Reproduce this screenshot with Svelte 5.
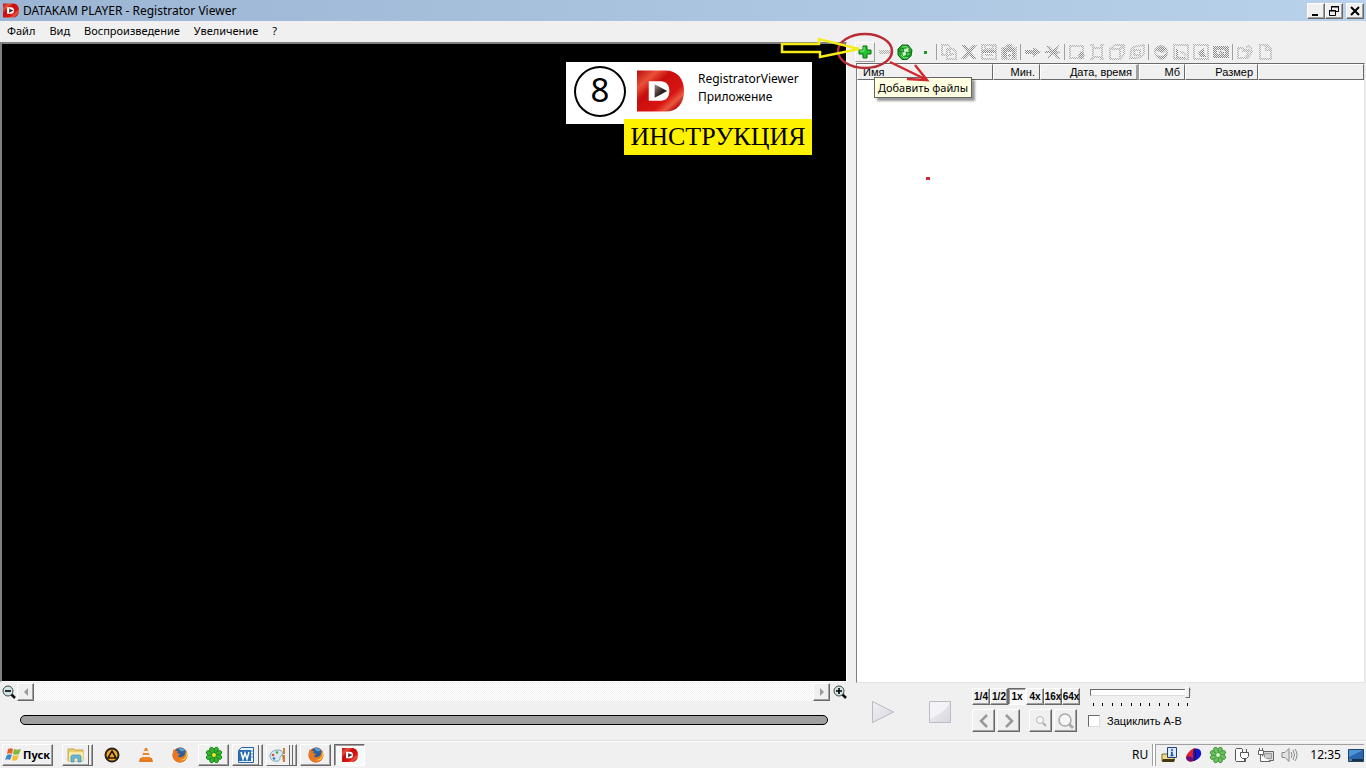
<script>
    const menu = ['Файл', 'Вид', 'Воспроизведение', 'Увеличение', '?'];

    // disabled toolbar groups, every group starts with a separator
    const toolGroups = [
        [
            { title: 'Копировать', d: 'M1 1h6l2 2v8H1z M6 5h6l3 3v7H6z M8 10h5' },
            { title: 'Удалить', d: '', fill: 'M0 1h4l4 4 4-4h4l-6 7 6 7h-4l-4-4-4 4H0l6-7z' },
            { title: 'Сохранить', d: 'M1 1h14v14H1z M4 1v4h8V1 M4 11h8', fill: 'M1 6h14v3H1z' },
            { title: 'Снимок', d: 'M1 4h3l3-3h3l2 3h3v11H1z', fill: 'M2 4h12v10h-3V8H6v6H2z M6 1h4v3H6z M7 10h3v3H7z' }
        ],
        [
            { title: 'Метка', d: '', fill: 'M0 6h8V3l8 5-8 5v-3H0z' },
            { title: 'Убрать метку', d: '', fill: 'M1 2h3l4 4 6-5h1l-4 6 5 1-4 2 3 5h-2l-5-5-4 4H2l4-5H0V7h5z' }
        ],
        [
            { title: 'Область', d: 'M1 2h13v12H1z', fill: 'M9 11l3-4 4 4-4 5z' },
            { title: 'Кадр', d: 'M4 4h9v9H4z M1 1h3v3 M12 4V1h3 M1 15h3v-3 M12 12v3h3' },
            { title: 'Слои', d: 'M1 5l5-4h9v9l-4 5H1z M1 5h10v10 M11 5l4-4' },
            { title: 'Поворот', d: 'M2 8c0-4 3-6 8-6l5-1v7c0 4-4 6-8 6H1z M5 6h6v5H5z' }
        ],
        [
            { title: 'Диск', d: 'M8 2a6 6 0 1 0 .1 0z', fill: 'M1 6l7-5 6 4-4 4z M3 11l6 1 6-4-2 6-5 2z' },
            { title: 'График', d: 'M1 1h14v14H1z M7 8l4 1 2 3', fill: 'M3 5h2v8h8v1H3z' },
            { title: 'Карта', d: 'M1 1h14v14H1z', fill: 'M5 8l6-4v5l3 4H7z' },
            { title: 'Видео', d: '', fill: 'M0 2h16v4H0z M0 10h16v4H0z M0 6h4v4H0z M12 6h4v4h-4z M5 8l3-2 1 2h3l-3 3-2-2z' }
        ],
        [
            { title: 'Открыть', d: 'M1 4h5l1 2h5l-3 8H1z M5 7h10l-4 7H3 M9 3l3-1 3 3' },
            { title: 'Создать', d: 'M3 1h7l4 4v10H3z M9 1v5h5' }
        ]
    ];

    const columns = [
        { name: 'Имя', width: 136 },
        { name: 'Мин.', width: 47 },
        { name: 'Дата, время', width: 99 },
        { name: 'Мб', width: 46 },
        { name: 'Размер', width: 73 }
    ];

    const speeds = ['1/4', '1/2', '1x', '4x', '16x', '64x'];
    let speed = $state('1x');
    let position = $state(0);
    let volume = $state(100);
    let loop = $state(false);
</script>

{#snippet logo()}
    <svg class="logo" viewBox="0 0 48 42" aria-hidden="true">
        <defs>
            <linearGradient id="red" x1="0" y1="0" x2="1" y2="1">
                <stop offset="0" stop-color="#b50d0d" />
                <stop offset=".22" stop-color="#ea5038" />
                <stop offset=".38" stop-color="#c80d0d" />
                <stop offset=".66" stop-color="#d81513" />
                <stop offset=".78" stop-color="#e85a40" />
                <stop offset=".88" stop-color="#b80c10" />
            </linearGradient>
            <linearGradient id="play" x1="0" y1="0" x2="1" y2="1">
                <stop offset="0" stop-color="#a89080" />
                <stop offset=".6" stop-color="#241818" />
                <stop offset="1" stop-color="#806860" />
            </linearGradient>
        </defs>
        <path d="M0 0h29c12 0 19 8 19 21s-7 21-19 21H0z" fill="url(#red)" />
        <path d="M12 11h12c6 0 9 4 9 10s-3 10-9 10H12z" fill="#fff" />
        <path d="M18 14l13 7-13 7z" fill="url(#play)" />
    </svg>
{/snippet}

{#snippet lens(sign)}
    <svg width="14" height="14" viewBox="0 0 14 14" aria-hidden="true">
        <path d="M9 9l4 4" stroke="#111" stroke-width="2.500" />
        <circle cx="6" cy="6" r="5" fill="#cfe6e6" stroke="#444" />
        <path d={sign} stroke="#000" stroke-width="1.600" />
    </svg>
{/snippet}

{#snippet firefox()}
    <svg width="16" height="16" viewBox="0 0 16 16" aria-hidden="true">
        <circle cx="8" cy="8" r="7.5" fill="#d9601b" />
        <circle cx="8.5" cy="6" r="5.4" fill="#2b5f9e" />
        <path d="M6 1.500c3-1 6 0 7 2l-3 1-2-1z" fill="#58a0cf" />
        <path d="M1 4l1-2 1.500 2L6 4l-1 2 3 1-2 2c1 2 5 2 7-2l1-4c2 5 1 8-2 11-4 3-9 1-11-3-1-3 0-5 0-6z" fill="#e87722" />
        <path d="M14 4c1 5-1 8-6 9 4 2 8-2 7-7z" fill="#f8c43c" />
    </svg>
{/snippet}

{#snippet flower(dark, light, core)}
    <svg width="18" height="18" viewBox="0 0 18 18" aria-hidden="true">
        {#each [22, 67, 112, 157, 202, 247, 292, 337] as angle}
            <ellipse cx="9" cy="4" rx="2.200" ry="3.300" fill={light} stroke={dark} stroke-width=".8" transform={`rotate(${angle} 9 9)`} />
        {/each}
        <circle cx="9" cy="9" r="2" fill={core} />
    </svg>
{/snippet}

<div class="window">
    <header class="titlebar">
        <span class="title-icon">{@render logo()}</span>
        <h1>DATAKAM PLAYER - Registrator Viewer</h1>
        <button class="raised caption" aria-label="Свернуть">
            <svg width="12" height="12" viewBox="0 0 12 12"><path d="M2 10h6" stroke="#000" stroke-width="2" /></svg>
        </button>
        <button class="raised caption" aria-label="Восстановить">
            <svg width="12" height="12" viewBox="0 0 12 12" fill="none" stroke="#000"><path d="M3.500 5V1.500h7v5H8M3 2h8M1.500 5.500h6v5h-6zM1 6h7" /></svg>
        </button>
        <button class="raised caption close" aria-label="Закрыть">
            <svg width="12" height="12" viewBox="0 0 12 12"><path d="M2 2l8 8M10 2l-8 8" stroke="#000" stroke-width="2" /></svg>
        </button>
    </header>

    <nav class="menu">
        {#each menu as item}
            <button>{item}</button>
        {/each}
    </nav>

    <main>
        <section class="player">
            <div class="screen">
                <div class="badge">
                    <div class="step">8</div>
                    <div class="app-card">
                        {@render logo()}
                        <p>RegistratorViewer<br />Приложение</p>
                    </div>
                    <div class="manual">ИНСТРУКЦИЯ</div>
                </div>
            </div>
            <div class="zoombar">
                <button class="plain" aria-label="Уменьшить">{@render lens('M3 6h6')}</button>
                <div class="hscroll">
                    <button class="raised" aria-label="Влево">
                        <svg width="6" height="8" viewBox="0 0 6 8"><path d="M5 0v8L1 4z" fill="#999" /></svg>
                    </button>
                    <button class="raised" aria-label="Вправо">
                        <svg width="6" height="8" viewBox="0 0 6 8"><path d="M1 0v8l4-4z" fill="#999" /></svg>
                    </button>
                </div>
                <button class="plain" aria-label="Увеличить">{@render lens('M3 6h6M6 3v6')}</button>
            </div>
            <input class="seek" type="range" min="0" max="100" bind:value={position} aria-label="Позиция" />
        </section>

        <section class="files">
            <div class="toolbar">
                <button class="tool active" aria-label="Добавить файлы">
                    <svg width="14" height="14" viewBox="0 0 14 14"><path d="M5 1h4v4h4v4H9v4H5V9H1V5h4z" fill="#22c62c" stroke="#087010" /><path d="M6 2v4H2" fill="none" stroke="#8af08a" /></svg>
                </button>
                <button class="tool" disabled aria-label="Убрать файлы">
                    <svg width="12" height="4" viewBox="0 0 12 4"><path d="M0 0h12v4H0z" fill="url(#dither-light)" /></svg>
                </button>
                <button class="tool" aria-label="Обновить">
                    <svg width="16" height="16" viewBox="0 0 16 16">
                        <path d="M5 1h6l4 5-1 6-4 3.500H5L1 11V5z" fill="#26a82e" stroke="#0c6414" />
                        <path d="M5 6l6-2 1 6-6 2z" fill="#d8f6d4" />
                        <path d="M1 7l5-3 1 4zM15 9l-5 4-1-5z" fill="#3ccc42" stroke="#0c6414" stroke-width=".7" />
                        <path d="M5 3l4-.500 3 2.500M11 13.500l-4 .5-3-3" fill="none" stroke="#7ee87c" />
                    </svg>
                </button>
                <button class="tool" aria-label="Список"><span class="dot"></span></button>
                {#each toolGroups as group}
                    <span class="separator"></span>
                    {#each group as tool}
                        <button class="tool" disabled aria-label={tool.title}>
                            <svg width="16" height="16" viewBox="0 0 16 16">
                                <path d={tool.d} fill="none" stroke="url(#dither-light)" stroke-width="2" />
                                {#if tool.fill}
                                    <path d={tool.fill} fill="url(#dither)" />
                                {/if}
                            </svg>
                        </button>
                    {/each}
                {/each}
            </div>

            <div class="list">
                <table>
                    <colgroup>
                        {#each columns as column}
                            <col style:width={`${column.width}px`} />
                        {/each}
                        <col />
                    </colgroup>
                    <thead>
                        <tr>
                            {#each columns as column}
                                <th scope="col">{column.name}</th>
                            {/each}
                            <td></td>
                        </tr>
                    </thead>
                </table>
                <span class="mark"></span>
            </div>

            <div class="controls">
                <div class="transport">
                    <button class="plain" disabled aria-label="Пуск">
                        <svg width="24" height="24" viewBox="0 0 24 24"><path d="M1.500 1.500v21l21-10.500z" fill="url(#glass)" stroke="#bbb" /></svg>
                    </button>
                    <button class="plain" disabled aria-label="Стоп">
                        <svg width="24" height="24" viewBox="0 0 24 24">
                            <defs>
                                <linearGradient id="glass" x1="0" y1="0" x2="1" y2="1">
                                    <stop offset="0" stop-color="#f2f2f4" />
                                    <stop offset="1" stop-color="#d6d6de" />
                                </linearGradient>
                                <pattern id="dither" width="2" height="2" patternUnits="userSpaceOnUse">
                                    <path d="M0 0h1v1H0zM1 1h1v1H1z" fill="#8a8a8a" />
                                </pattern>
                                <pattern id="dither-light" width="2" height="2" patternUnits="userSpaceOnUse">
                                    <path d="M0 0h1v1H0zM1 1h1v1H1z" fill="#b0b0b0" />
                                </pattern>
                            </defs>
                            <path d="M1.500 1.500h21v21h-21z" fill="url(#glass)" stroke="#bcbcc4" />
                            <path d="M2 2h20C17 11 12 14 2 19z" fill="#f4f4f8" />
                        </svg>
                    </button>
                </div>
                <div class="playback">
                    <div class="speeds">
                        {#each speeds as value}
                            <button class="raised" class:pressed={speed === value} onclick={() => (speed = value)}>{value}</button>
                        {/each}
                    </div>
                    <div class="steps">
                        <button class="raised" aria-label="Назад">
                            <svg width="18" height="18" viewBox="0 0 18 18"><path d="M12 3L6 9l6 6" fill="none" stroke="#999" stroke-width="2.500" /></svg>
                        </button>
                        <button class="raised" aria-label="Вперёд">
                            <svg width="18" height="18" viewBox="0 0 18 18"><path d="M6 3l6 6-6 6" fill="none" stroke="#999" stroke-width="2.500" /></svg>
                        </button>
                        <button class="raised zoom" aria-label="Мельче">
                            <svg width="18" height="18" viewBox="0 0 18 18"><circle cx="8" cy="8" r="3.500" fill="#f6f6f6" stroke="#b4b4b4" /><path d="M11 11l3 3" stroke="#aaa" stroke-width="2" /></svg>
                        </button>
                        <button class="raised" aria-label="Крупнее">
                            <svg width="18" height="18" viewBox="0 0 18 18"><circle cx="8" cy="8" r="6" fill="#f6f6f6" stroke="#aaa" stroke-width="1.500" /><path d="M12 12l4 4" stroke="#aaa" stroke-width="3" /></svg>
                        </button>
                    </div>
                </div>
                <div class="sound">
                    <input class="volume" type="range" min="0" max="100" bind:value={volume} aria-label="Громкость" />
                    <div class="ticks">
                        {#each Array(11) as _}
                            <span></span>
                        {/each}
                    </div>
                    <label><input type="checkbox" bind:checked={loop} />Зациклить A-B</label>
                </div>
            </div>

            <div class="tooltip" role="tooltip">Добавить файлы</div>
            <svg class="pointer" width="160" height="60" viewBox="778 30 160 60" fill="none" aria-hidden="true">
                <ellipse cx="865" cy="51" rx="27" ry="17" stroke="#b92d36" stroke-width="2.500" />
                <path d="M890 62l37 18M915 65l12 15-20-1" stroke="#d02a30" stroke-width="2.500" />
                <path d="M782 44h37v-5l40 10-39 8v-5h-38z" stroke="#f6ec1c" stroke-width="2.500" />
            </svg>
        </section>
    </main>

    <footer class="taskbar">
        <button class="raised start">
            <svg width="17" height="16" viewBox="0 0 17 16" aria-hidden="true">
                <path d="M3 2c2-1 3-1 5 0L7 7C5 6 4 6 2 7z" fill="#e8602c" />
                <path d="M9 2c2 1 4 1 7 0l-2 5c-2 1-4 1-6 0z" fill="#7db83a" />
                <path d="M2 8c2-1 3-1 5 0l-2 5c-2-1-3-1-5 0z" fill="#3c88c8" />
                <path d="M8 8c2 1 4 1 6 0l-2 5c-2 1-4 1-5 0z" fill="#f4c030" />
            </svg>
            Пуск
        </button>
        <div class="apps">
            <button class="raised stack" aria-label="Проводник">
                <svg width="18" height="16" viewBox="0 0 18 16"><path d="M1 2h6l1 1h8v11H1z" fill="#e9cf72" stroke="#c8a848" /><path d="M2 5h14v9H2z" fill="#f8e9a8" /><path d="M4 15V10q0-2 2-2h6q2 0 2 2v5h-3v-4H7v4z" fill="#68b8dc" stroke="#408cb4" stroke-width=".7" /></svg>
            </button>
            <button class="plain" aria-label="AIMP">
                <svg width="16" height="16" viewBox="0 0 16 16"><circle cx="8" cy="8" r="6.500" fill="#f4a828" stroke="#2c2418" stroke-width="2" /><path d="M8 4l4 7H4z" fill="none" stroke="#201810" stroke-width="1.600" /></svg>
            </button>
            <button class="plain" aria-label="VLC">
                <svg width="16" height="16" viewBox="0 0 16 16"><path d="M2 11h12l1 4H1z" fill="#e07820" /><path d="M7 1h2l4 11q-5 2-10 0z" fill="#f08424" /><path d="M6 4h4l1 2H5zM4.500 8h7l1 2h-9z" fill="#eee" /></svg>
            </button>
            <button class="plain" aria-label="Firefox">{@render firefox()}</button>
            <button class="raised" aria-label="ICQ">{@render flower('#167a16', '#35b52e', '#f0e020')}</button>
            <button class="raised stack" aria-label="Word">
                <svg width="16" height="16" viewBox="0 0 16 16"><path d="M3.500 .500h12v15h-15v-12z" fill="#e8f2fa" stroke="#2a64a4" /><path d="M1 3h12v11H1z" fill="#2a6cb0" /><path d="M3 5l2 7 2-6 2 6 2-7" fill="none" stroke="#fff" stroke-width="1.500" /><path d="M13 4h2M13 7h2M13 10h2" stroke="#5a90c4" /></svg>
            </button>
            <button class="raised stack double" aria-label="Paint">
                <svg width="18" height="16" viewBox="0 0 18 16"><path d="M1 9c0-4 4-6 8-6 5 0 6 4 3 6-2 1 0 4-3 5-4 1-8-1-8-5z" fill="#d6e8f0" stroke="#7ca4b8" /><circle cx="4" cy="8" r="1.300" fill="#d05040" /><circle cx="8" cy="5.500" r="1.300" fill="#50a050" /><circle cx="5" cy="11.500" r="1.300" fill="#4078c0" /><path d="M14 1l2 0v6l-2 0zM13 8h3v7h-2z" fill="#c8803c" /></svg>
            </button>
            <button class="raised" aria-label="Firefox">{@render firefox()}</button>
            <button class="raised pressed" aria-label="DATAKAM PLAYER">{@render logo()}</button>
        </div>
        <span class="lang">RU</span>
        <div class="tray">
            <svg width="17" height="16" viewBox="0 0 17 16"><path d="M1 7h12v7H1z" fill="#f0dc80" stroke="#806820" /><path d="M2 12h12l-1 3H1z" fill="#443810" /><path d="M6.500 .500h9v10h-9z" fill="#dceafc" stroke="#204080" /><path d="M11 2v2M10 5.500h1v3M9.500 8.500h3" stroke="#1850b0" stroke-width="1.500" /></svg>
            <svg width="17" height="16" viewBox="0 0 17 16"><path d="M1 10C2 6 6 2 10 1l4 4-5 9c-4 2-8 0-8-4z" fill="#e02030" /><path d="M9 2c5-2 8 2 7 6-1 3-4 5-7 6-1-4-2-8 0-12z" fill="#1818c8" /><path d="M1 10c3-2 6 0 9 3-4 3-9 1-9-3z" fill="#601080" /><path d="M9 2c2 3 2 8 0 12" fill="none" stroke="#200820" /></svg>
            {@render flower('#3c8c38', '#6cc060', '#c8f4c0')}
            <svg width="16" height="16" viewBox="0 0 16 16" fill="none" stroke="#555"><path d="M8 1.500H2.500l-1 1v11l1 1h9V12" fill="#fafafa" /><path d="M6.500 5.500h8v4l-2 2h-4l-2-2zM8.500 5V2M12.500 5V2M10.500 11v3" fill="#fff" /></svg>
            <svg width="17" height="16" viewBox="0 0 17 16" stroke="#666"><path d="M5.500 4.500h11v9h-11z" fill="#ddd" /><path d="M7.500 6.500h7v5h-7z" fill="#ccc" stroke="#999" /><path d="M1.500 3.500h5v4h-5zM2.500 3V1M5.500 3V1M3.500 8v6.500h10" fill="#fff" /></svg>
            <svg width="17" height="16" viewBox="0 0 17 16" fill="none" stroke="#888"><path d="M1 5.500h3l4-4v13l-4-4H1z" fill="#e4e4e4" /><path d="M10 5q2 3 0 6M12 3q3 5 0 10M14 2q4 6 0 12" /></svg>
            <time>12:35</time>
            <svg class="desktop" width="16" height="13" viewBox="0 0 16 13"><path d="M.500 .500h15v12H.500z" fill="#2866b0" stroke="#24415f" /><path d="M1 1h14L1 8z" fill="#4c94d8" /><path d="M1 11h14" stroke="#16304c" stroke-width="2" /><path d="M1 11h3" stroke="#9cd0f0" /></svg>
        </div>
    </footer>
</div>

<style>
    :global(body) {
        background: #f0f0f0;
    }

    .window {
        display: flex;
        flex-direction: column;
        height: 100vh;
        overflow: hidden;
        background: #f0f0f0;
        color: #000;
        font: 12px/16px "Noto Sans", "Open Sans", sans-serif;
    }

    button {
        display: flex;
        align-items: center;
        justify-content: center;
        box-sizing: border-box;
        padding: 0;
        border: 0;
        background: none;
        color: inherit;
        font: inherit;
    }

    svg {
        display: block;
        flex: none;
    }

    .raised {
        border: 1px solid;
        border-color: #fff #696969 #696969 #fff;
        box-shadow: inset -1px -1px #a0a0a0;
        background: #f0f0f0;
    }

    .pressed {
        border-color: #696969 #fff #fff #696969;
        box-shadow: inset 1px 1px #a0a0a0;
        background: #f8f8f8;
    }

    .titlebar {
        display: flex;
        align-items: center;
        height: 21px;
        padding: 0 2px 0 3px;
        background: linear-gradient(90deg, #9bb5d3, #b9d1ea);
    }

    .title-icon .logo {
        width: 16px;
        height: 15px;
    }

    h1 {
        flex: 1;
        margin: 0 0 0 4px;
        font-size: 12px;
        font-weight: 400;
        white-space: nowrap;
    }

    .caption {
        width: 18px;
        height: 16px;
    }

    .close {
        margin-left: 3px;
    }

    .menu {
        display: flex;
        gap: 14px;
        height: 20px;
        padding-left: 7px;
        font-size: 11px;
    }

    main {
        display: grid;
        grid-template-columns: minmax(0, 1fr) 511px;
        gap: 8px;
        flex: 1;
        min-height: 0;
        border-bottom: 1px solid #dfdfdf;
    }

    .player {
        display: flex;
        flex-direction: column;
        min-width: 0;
    }

    .screen {
        position: relative;
        flex: 1;
        margin-top: 1px;
        border: 1px solid;
        border-width: 2px 1px 1px 2px;
        border-color: #808080 #fff #fff #808080;
        background: #000;
    }

    .badge {
        position: absolute;
        top: 18px;
        right: 34px;
        display: grid;
        grid-template-columns: 58px 188px;
    }

    .badge::before {
        content: "";
        grid-area: 1 / 1 / 2 / 3;
        background: #fff;
    }

    .step {
        grid-area: 1 / 1;
        display: flex;
        align-items: center;
        justify-content: center;
        box-sizing: border-box;
        width: 52px;
        height: 51px;
        margin: 4px 0 7px 8px;
        padding-bottom: 3px;
        border: 2px solid #000;
        border-radius: 50%;
        font-size: 33px;
        z-index: 1;
    }

    .app-card {
        grid-area: 1 / 2;
        display: flex;
        gap: 14px;
        padding: 8px 0 0 13px;
        z-index: 1;
    }

    .app-card .logo {
        width: 47px;
        height: 42px;
    }

    .app-card p {
        margin: 0;
        line-height: 18px;
    }

    .manual {
        grid-area: 2 / 2;
        height: 36px;
        margin-top: -5px;
        background: #fff200;
        font: 26px/36px "Liberation Serif", serif;
        text-align: center;
        z-index: 2;
    }

    .zoombar {
        display: flex;
        align-items: center;
        gap: 1px;
        height: 19px;
        padding-left: 2px;
    }

    .hscroll {
        display: flex;
        justify-content: space-between;
        flex: 1;
        height: 18px;
        background: repeating-conic-gradient(#fff 0 25%, #f0f0f0 0 50%) 0 0 / 2px 2px;
    }

    .hscroll .raised {
        width: 17px;
    }

    .zoombar .plain:last-child {
        margin: 0 0 0 2px;
    }

    .seek {
        appearance: none;
        box-sizing: border-box;
        height: 10px;
        margin: 14px 19px 15px 20px;
        border: 1px solid #000;
        border-radius: 5px;
        background: #a0a0a0;
    }

    .seek::-webkit-slider-thumb {
        appearance: none;
        width: 1px;
        height: 8px;
    }

    .files {
        position: relative;
        display: flex;
        flex-direction: column;
        min-width: 0;
    }

    .toolbar {
        display: flex;
        align-items: center;
        height: 22px;
    }

    .tool {
        width: 20px;
        height: 20px;
    }

    .tool.active {
        border: 1px solid;
        border-color: #fff #a0a0a0 #a0a0a0 #fff;
    }

    .separator {
        width: 1px;
        height: 16px;
        margin: 0 2px 0 1px;
        background: #a0a0a0;
    }

    .dot {
        width: 3px;
        height: 3px;
        background: #169c22;
    }

    .list {
        position: relative;
        flex: 1;
        margin: 0 1px;
        border: 1px solid;
        border-color: #696969 #e3e3e3 #e3e3e3 #808080;
        background: #fff;
    }

    table {
        width: 100%;
        table-layout: fixed;
        border-collapse: separate;
        border-spacing: 0;
        font: 11px/14px "Liberation Sans", sans-serif;
    }

    th,
    td {
        height: 14px;
        padding: 0 4px;
        border: 1px solid;
        border-color: #fff #696969 #696969 #fff;
        background: #f0f0f0;
        font-weight: 400;
        text-align: right;
        white-space: nowrap;
    }

    th:first-child {
        padding-left: 5px;
        text-align: left;
    }

    th:nth-child(3) {
        border-right: 3px solid #a0a0a0;
    }

    .mark {
        position: absolute;
        top: 113px;
        left: 69px;
        width: 4px;
        height: 3px;
        background: #d02a30;
    }

    .controls {
        display: flex;
        height: 57px;
    }

    .transport {
        display: flex;
        gap: 33px;
        width: 101px;
        padding-left: 16px;
    }

    .speeds,
    .steps {
        display: flex;
    }

    .speeds {
        margin: 5px 0 4px;
        font: bold 10px/14px "Liberation Sans", sans-serif;
    }

    .speeds button {
        width: 18px;
        height: 17px;
    }

    .steps {
        gap: 2px;
    }

    .steps button {
        width: 23px;
        height: 23px;
    }

    .steps .zoom {
        margin-left: 7px;
    }

    .sound {
        width: 104px;
        padding: 4px 0 0 8px;
    }

    .volume {
        appearance: none;
        display: block;
        width: 101px;
        height: 11px;
        margin: 0 0 0 2px;
        background: none;
    }

    .volume::-webkit-slider-runnable-track {
        box-sizing: border-box;
        height: 7px;
        border: 1px solid;
        border-color: #696969 #ddd #ddd #696969;
        background: #fff;
    }

    .volume::-webkit-slider-thumb {
        appearance: none;
        width: 5px;
        height: 11px;
        margin-top: -3px;
        border: 1px solid;
        border-color: #fff #696969 #696969 #fff;
        background: #f0f0f0;
    }

    .ticks {
        display: flex;
        justify-content: space-between;
        width: 95px;
        margin: 5px 0 8px 5px;
    }

    .ticks span {
        width: 1px;
        height: 3px;
        background: #000;
    }

    label {
        display: flex;
        align-items: center;
        gap: 7px;
        font: 11px/14px "Liberation Sans", sans-serif;
        white-space: nowrap;
    }

    label input {
        appearance: none;
        box-sizing: border-box;
        width: 12px;
        height: 12px;
        margin: 0;
        border: 1px solid;
        border-color: #696969 #ddd #ddd #696969;
        background: #fff;
    }

    label input:checked {
        box-shadow: inset 0 0 0 2px #fff;
        background: #000;
    }

    .tooltip {
        position: absolute;
        top: 36px;
        left: 19px;
        padding: 1px 3px;
        border: 1px solid #646464;
        box-shadow: 3px 3px 2px rgba(0, 0, 0, 0.4);
        background: #ffffe1;
        font-size: 11px;
        line-height: 17px;
        white-space: nowrap;
    }

    .pointer {
        position: absolute;
        top: -11px;
        left: -77px;
        pointer-events: none;
    }

    .taskbar {
        display: flex;
        align-items: center;
        height: 26px;
        padding: 0 2px;
        border-top: 1px solid #fff;
    }

    .start {
        gap: 1px;
        width: 51px;
        height: 22px;
        font-size: 11px;
        font-weight: 700;
    }

    .apps {
        display: flex;
        flex: 1;
        gap: 3px;
        margin-left: 9px;
    }

    .apps button {
        width: 31px;
        height: 22px;
    }

    .apps .stack {
        padding-right: 4px;
        box-shadow: inset -1px 0 #a0a0a0, inset -3px 0 #f0f0f0, inset -4px 0 #696969, inset 0 -1px #a0a0a0;
    }

    .apps .double {
        padding-right: 7px;
        box-shadow: inset -1px 0 #a0a0a0, inset -3px 0 #f0f0f0, inset -4px 0 #696969, inset -6px 0 #f0f0f0, inset -7px 0 #696969;
    }

    .apps .logo {
        width: 16px;
        height: 14px;
    }

    .lang {
        margin-right: 4px;
    }

    .tray {
        display: flex;
        align-items: center;
        gap: 7px;
        height: 22px;
        padding: 0 0 0 8px;
        border-left: 1px solid #a0a0a0;
        box-shadow: inset 2px 0 #fff, inset 3px 1px #a0a0a0;
    }

    time {
        margin-left: 5px;
    }
</style>
